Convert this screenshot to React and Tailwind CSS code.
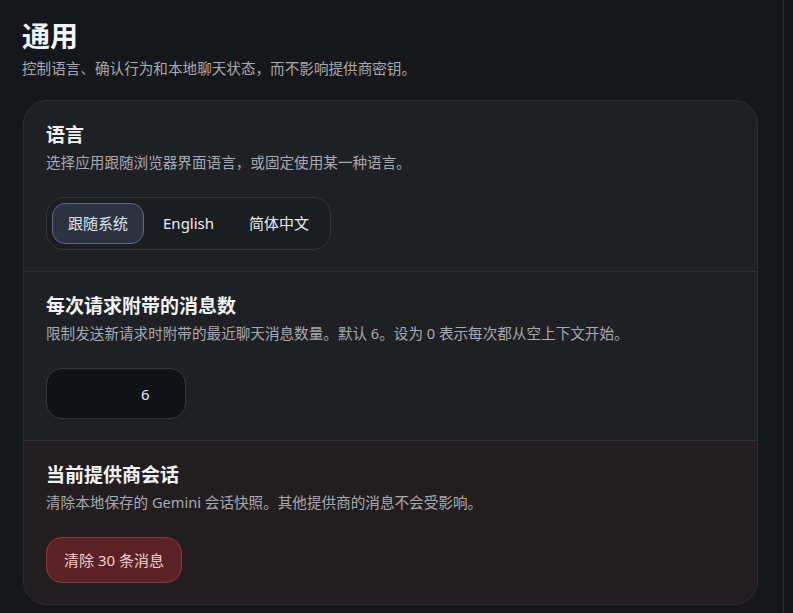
import React, { useState } from 'react';

const font = { fontFamily: '"Noto Sans", "Noto Sans CJK SC", sans-serif' };

const Section = ({ title, desc, tinted, last, children }) => (
  <section
    className={`px-[22px] pt-[21px] pb-[21px] ${last ? '' : 'border-b border-[#2c2e33]'} ${
      tinted ? 'bg-[#221e1f]' : ''
    }`}
  >
    <h2 className="text-[19px] leading-[26px] font-bold text-[#f2f3f5]">{title}</h2>
    <p className="mt-[4px] text-[14.6px] leading-[21px] text-[#a7aab0]">{desc}</p>
    <div className="mt-[24px]">{children}</div>
  </section>
);

export default function App() {
  const [lang, setLang] = useState('system');
  const options = [
    { id: 'system', label: '跟随系统' },
    { id: 'en', label: 'English' },
    { id: 'zh', label: '简体中文' },
  ];

  return (
    <div className="flex h-[613px] w-[793px] bg-[#16171a] overflow-hidden" style={font}>
      <main className="flex-1 border-r border-[#2a2b2f] pl-[22px] pr-[25px] pt-[18px]">
        {/* Page header */}
        <h1 className="text-[28px] leading-[36px] font-bold text-[#f4f5f7]">通用</h1>
        <p className="mt-[3px] text-[14.6px] leading-[22px] text-[#a7aab0]">
          控制语言、确认行为和本地聊天状态，而不影响提供商密钥。
        </p>

        {/* Settings card */}
        <div className="mt-[21px] ml-[1px] rounded-[24px] border border-[#2c2e33] bg-[#1f2024] overflow-hidden">
          <Section title="语言" desc="选择应用跟随浏览器界面语言，或固定使用某一种语言。">
            <div className="inline-flex items-center gap-[3px] rounded-[18px] border border-[#33353b] bg-[#1c1d21] p-[5px]">
              {options.map((o) => (
                <button
                  key={o.id}
                  onClick={() => setLang(o.id)}
                  className={`h-[41px] rounded-[13px] px-[15px] text-[15px] ${
                    lang === o.id
                      ? 'border border-[#5b6a85] bg-[#2c333f] text-[#dbe3f0]'
                      : 'border border-transparent text-[#eceef1]'
                  }`}
                >
                  {o.label}
                </button>
              ))}
            </div>
          </Section>

          <Section
            title="每次请求附带的消息数"
            desc="限制发送新请求时附带的最近聊天消息数量。默认 6。设为 0 表示每次都从空上下文开始。"
          >
            <input
              type="text"
              defaultValue="6"
              className="block h-[51px] w-[140px] rounded-[16px] border border-[#35373c] bg-[#111216] pl-[94px] pr-[10px] text-[15px] text-[#e8eaee] outline-none"
            />
          </Section>

          <Section
            tinted
            last
            title="当前提供商会话"
            desc="清除本地保存的 Gemini 会话快照。其他提供商的消息不会受影响。"
          >
            <button className="block h-[46px] rounded-[16px] border border-[#8a3c3c] bg-[#5a2225] px-[17px] text-[15px] text-[#f3cccc]">
              清除 30 条消息
            </button>
          </Section>
        </div>
      </main>
      <div className="w-[9px] bg-[#141518]" />
    </div>
  );
}
